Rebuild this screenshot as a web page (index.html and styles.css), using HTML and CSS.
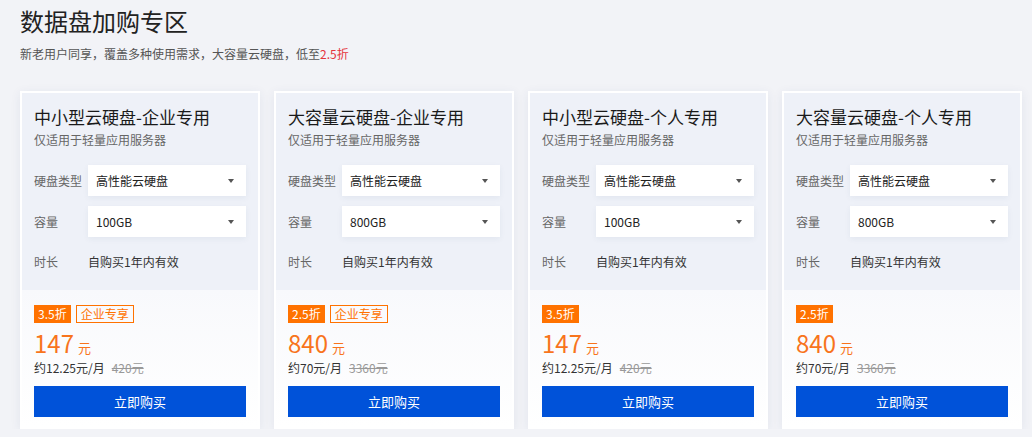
FILE: index.html
```html
<!DOCTYPE html>
<html lang="zh-CN">
<head>
    <meta charset="UTF-8">
    <meta name="viewport" content="width=device-width, initial-scale=1.0">
    <title>数据盘加购专区</title>
    <link rel="stylesheet" href="styles.css">
</head>
<body>
    <div class="zone">
        <h1 class="zone-title">数据盘加购专区</h1>
        <p class="zone-desc">新老用户同享，覆盖多种使用需求，大容量云硬盘，低至<span class="hl">2.5折</span></p>

        <div class="card-list">
            <!-- 卡片 1 -->
            <div class="card">
                <div class="card-top">
                    <h2 class="card-title">中小型云硬盘-企业专用</h2>
                    <p class="card-sub">仅适用于轻量应用服务器</p>
                    <div class="field">
                        <span class="field-label">硬盘类型</span>
                        <div class="select"><span>高性能云硬盘</span><i class="caret"></i></div>
                    </div>
                    <div class="field">
                        <span class="field-label">容量</span>
                        <div class="select"><span>100GB</span><i class="caret"></i></div>
                    </div>
                    <div class="field">
                        <span class="field-label">时长</span>
                        <span class="field-text">自购买1年内有效</span>
                    </div>
                </div>
                <div class="card-bottom">
                    <div class="tags">
                        <span class="tag-discount">3.5折</span>
                        <span class="tag-line">企业专享</span>
                    </div>
                    <div class="price"><span class="price-num">147</span><span class="price-unit">元</span></div>
                    <div class="price-sub">约12.25元/月<del>420元</del></div>
                    <button class="buy-btn">立即购买</button>
                </div>
            </div>

            <!-- 卡片 2 -->
            <div class="card">
                <div class="card-top">
                    <h2 class="card-title">大容量云硬盘-企业专用</h2>
                    <p class="card-sub">仅适用于轻量应用服务器</p>
                    <div class="field">
                        <span class="field-label">硬盘类型</span>
                        <div class="select"><span>高性能云硬盘</span><i class="caret"></i></div>
                    </div>
                    <div class="field">
                        <span class="field-label">容量</span>
                        <div class="select"><span>800GB</span><i class="caret"></i></div>
                    </div>
                    <div class="field">
                        <span class="field-label">时长</span>
                        <span class="field-text">自购买1年内有效</span>
                    </div>
                </div>
                <div class="card-bottom">
                    <div class="tags">
                        <span class="tag-discount">2.5折</span>
                        <span class="tag-line">企业专享</span>
                    </div>
                    <div class="price"><span class="price-num">840</span><span class="price-unit">元</span></div>
                    <div class="price-sub">约70元/月<del>3360元</del></div>
                    <button class="buy-btn">立即购买</button>
                </div>
            </div>

            <!-- 卡片 3 -->
            <div class="card">
                <div class="card-top">
                    <h2 class="card-title">中小型云硬盘-个人专用</h2>
                    <p class="card-sub">仅适用于轻量应用服务器</p>
                    <div class="field">
                        <span class="field-label">硬盘类型</span>
                        <div class="select"><span>高性能云硬盘</span><i class="caret"></i></div>
                    </div>
                    <div class="field">
                        <span class="field-label">容量</span>
                        <div class="select"><span>100GB</span><i class="caret"></i></div>
                    </div>
                    <div class="field">
                        <span class="field-label">时长</span>
                        <span class="field-text">自购买1年内有效</span>
                    </div>
                </div>
                <div class="card-bottom">
                    <div class="tags">
                        <span class="tag-discount">3.5折</span>
                    </div>
                    <div class="price"><span class="price-num">147</span><span class="price-unit">元</span></div>
                    <div class="price-sub">约12.25元/月<del>420元</del></div>
                    <button class="buy-btn">立即购买</button>
                </div>
            </div>

            <!-- 卡片 4 -->
            <div class="card">
                <div class="card-top">
                    <h2 class="card-title">大容量云硬盘-个人专用</h2>
                    <p class="card-sub">仅适用于轻量应用服务器</p>
                    <div class="field">
                        <span class="field-label">硬盘类型</span>
                        <div class="select"><span>高性能云硬盘</span><i class="caret"></i></div>
                    </div>
                    <div class="field">
                        <span class="field-label">容量</span>
                        <div class="select"><span>800GB</span><i class="caret"></i></div>
                    </div>
                    <div class="field">
                        <span class="field-label">时长</span>
                        <span class="field-text">自购买1年内有效</span>
                    </div>
                </div>
                <div class="card-bottom">
                    <div class="tags">
                        <span class="tag-discount">2.5折</span>
                    </div>
                    <div class="price"><span class="price-num">840</span><span class="price-unit">元</span></div>
                    <div class="price-sub">约70元/月<del>3360元</del></div>
                    <button class="buy-btn">立即购买</button>
                </div>
            </div>
        </div>
    </div>
</body>
</html>
```

FILE: styles.css
```css
body {
    font-family: "Noto Sans CJK SC", "Liberation Sans", sans-serif;
    margin: 0;
    padding: 0;
    background-color: #f2f3f7;
    color: #333;
}

.zone {
    padding: 5px 20px 0;
}

.zone-title {
    margin: 0;
    font-size: 24px;
    line-height: 32px;
    font-weight: 400;
    color: #222;
}

.zone-desc {
    margin: 7px 0 0;
    font-size: 12px;
    line-height: 20px;
    color: #555;
}

.zone-desc .hl {
    color: #e5343b;
}

.card-list {
    display: grid;
    grid-template-columns: repeat(4, 240px);
    gap: 14px;
    margin-top: 27px;
}

.card {
    background-color: #fff;
    padding: 2px;
    box-shadow: 0 2px 10px rgba(40, 60, 110, 0.08);
}

.card-top {
    background-color: #eef1f8;
    padding: 12px 12px 15px;
}

.card-title {
    margin: 0;
    font-size: 17px;
    line-height: 24px;
    font-weight: 400;
    color: #1a1a1a;
}

.card-sub {
    margin: 1px 0 15px;
    font-size: 12px;
    line-height: 20px;
    color: #666;
}

.field {
    display: flex;
    align-items: center;
    height: 31px;
    margin-bottom: 10px;
    font-size: 12px;
}

.field:last-child {
    height: 28px;
    margin-bottom: 0;
}

.field-label {
    width: 54px;
    color: #666;
}

.field-text {
    color: #333;
}

.select {
    flex: 1;
    height: 31px;
    display: flex;
    align-items: center;
    justify-content: space-between;
    padding: 0 12px 0 8px;
    background-color: #fff;
    box-shadow: 0 2px 6px rgba(40, 60, 110, 0.06);
    color: #222;
}

.caret {
    width: 0;
    height: 0;
    border-left: 3.5px solid transparent;
    border-right: 3.5px solid transparent;
    border-top: 4px solid #555;
}

.card-bottom {
    background: linear-gradient(#f8f9fc, #fff);
    padding: 15px 12px 10px;
}

.tags {
    display: flex;
    gap: 5px;
    height: 18px;
}

.tag-discount, .tag-line {
    display: inline-block;
    height: 18px;
    line-height: 18px;
    padding: 0 4px;
    font-size: 12px;
    box-sizing: border-box;
}

.tag-discount {
    background-color: #ff7200;
    color: #fff;
}

.tag-line {
    border: 1px solid #ff7200;
    line-height: 16px;
    color: #ff7200;
}

.price {
    display: flex;
    align-items: baseline;
    height: 30px;
    margin-top: 5px;
    line-height: 30px;
    color: #f8741c;
}

.price-num {
    font-size: 24px;
}

.price-unit {
    font-size: 13px;
    margin-left: 4px;
}

.price-sub {
    height: 20px;
    font-size: 12px;
    line-height: 20px;
    color: #333;
}

.price-sub del {
    margin-left: 7px;
    color: #999;
}

.buy-btn {
    display: block;
    width: 100%;
    height: 31px;
    margin-top: 8px;
    background-color: #0052d9;
    color: #fff;
    border: none;
    font-family: inherit;
    font-size: 13px;
    cursor: pointer;
}

.buy-btn:hover {
    background-color: #0046b8;
}
```
